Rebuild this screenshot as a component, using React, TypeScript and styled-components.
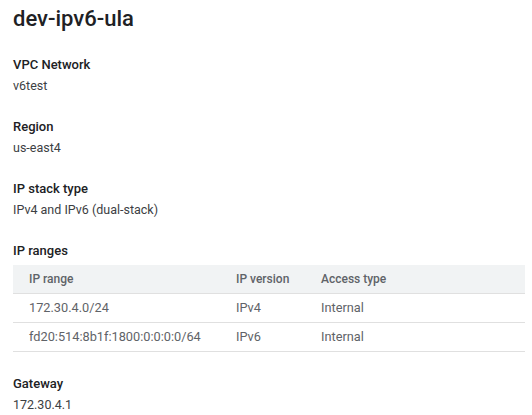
import React from "react";
import styled, { createGlobalStyle } from "styled-components";

const GlobalStyle = createGlobalStyle`
  html, body { margin: 0; padding: 0; background: #ffffff; }
  body { font-family: Roboto, "Noto Sans", Arial, sans-serif; -webkit-font-smoothing: antialiased; }
`;

const Page = styled.div`
  padding: 6px 7px 0 13px;
  display: flex;
  flex-direction: column;
`;

const Title = styled.h1`
  margin: 0 0 23px;
  font-size: 22px;
  line-height: 26px;
  font-weight: 500;
  color: #202124;
`;

const Sections = styled.div`
  display: flex;
  flex-direction: column;
  gap: 21px;
`;

const Section = styled.section`
  display: flex;
  flex-direction: column;
  gap: 1px;
`;

const Label = styled.div`
  font-size: 13px;
  line-height: 20px;
  font-weight: 500;
  color: #202124;
`;

const Value = styled.div`
  font-size: 12.5px;
  line-height: 20px;
  font-weight: 400;
  color: #3c4043;
`;

const Table = styled.table`
  margin-top: 3px;
  margin-bottom: 1px;
  width: 512px;
  border-collapse: collapse;
  table-layout: fixed;
  font-size: 12.75px;
`;

const Th = styled.th<{ $w?: number }>`
  box-sizing: border-box;
  width: ${(p) => (p.$w ? `${p.$w}px` : "auto")};
  height: 28px;
  padding: 0 0 0 16px;
  text-align: left;
  font-size: 12px;
  font-weight: 500;
  color: #5f6368;
  background: #f1f3f4;
  border-bottom: 1px solid #e0e0e0;
`;

const Td = styled.td`
  height: 28px;
  padding: 0 0 0 16px;
  color: #5f6368;
  border-bottom: 1px solid #e0e0e0;
  white-space: nowrap;
`;

const ranges = [
  { range: "172.30.4.0/24", version: "IPv4", access: "Internal" },
  { range: "fd20:514:8b1f:1800:0:0:0:0/64", version: "IPv6", access: "Internal" },
];

export default function App() {
  return (
    <>
      <GlobalStyle />
      <Page>
        <Title>dev-ipv6-ula</Title>
        <Sections>
          <Section>
            <Label>VPC Network</Label>
            <Value>v6test</Value>
          </Section>
          <Section>
            <Label>Region</Label>
            <Value>us-east4</Value>
          </Section>
          <Section>
            <Label>IP stack type</Label>
            <Value>IPv4 and IPv6 (dual-stack)</Value>
          </Section>
          <Section>
            <Label>IP ranges</Label>
            <Table>
              <thead>
                <tr>
                  <Th $w={207}>IP range</Th>
                  <Th $w={85}>IP version</Th>
                  <Th>Access type</Th>
                </tr>
              </thead>
              <tbody>
                {ranges.map((r) => (
                  <tr key={r.range}>
                    <Td>{r.range}</Td>
                    <Td>{r.version}</Td>
                    <Td>{r.access}</Td>
                  </tr>
                ))}
              </tbody>
            </Table>
          </Section>
          <Section>
            <Label>Gateway</Label>
            <Value>172.30.4.1</Value>
          </Section>
        </Sections>
      </Page>
    </>
  );
}
